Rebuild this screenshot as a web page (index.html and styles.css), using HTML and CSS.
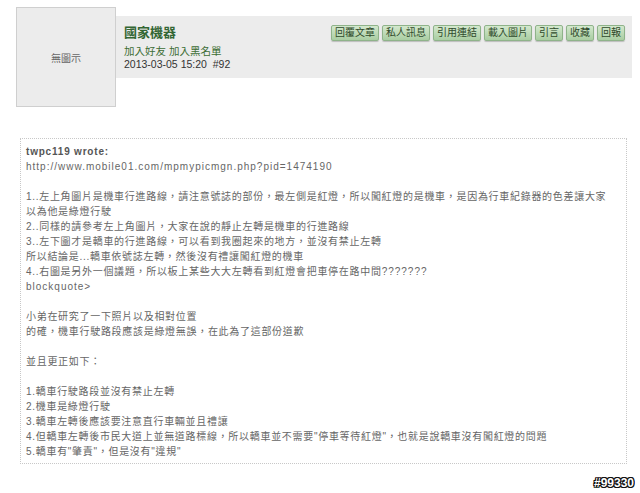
FILE: index.html
```html
<!DOCTYPE html>
<html>
<head>
<meta charset="utf-8">
<link rel="stylesheet" href="styles.css">
</head>
<body>
<div class="post">
  <div class="avatar">無圖示</div>
  <div class="head">
    <div class="info">
      <div class="name">國家機器</div>
      <div class="links"><a>加入好友</a> <a>加入黑名單</a></div>
      <div class="date">2013-03-05 15:20&nbsp; #92</div>
    </div>
    <div class="btns">
      <span class="btn">回覆文章</span>
      <span class="btn">私人訊息</span>
      <span class="btn">引用連結</span>
      <span class="btn">載入圖片</span>
      <span class="btn">引言</span>
      <span class="btn">收藏</span>
      <span class="btn">回報</span>
    </div>
  </div>
</div>
<div class="quote">
  <div class="ln who"><span class="en">twpc119 wrote:</span></div>
  <div class="ln"><span class="en">http://www.mobile01.com/mpmypicmgn.php?pid=1474190</span></div>
  <div class="ln blank"></div>
  <div class="ln">1..左上角圖片是機車行進路線，請注意號誌的部份，最左側是紅燈，所以闖紅燈的是機車，是因為行車紀錄器的色差讓大家</div>
  <div class="ln">以為他是綠燈行駛</div>
  <div class="ln">2..同樣的請參考左上角圖片，大家在說的靜止左轉是機車的行進路線</div>
  <div class="ln">3..左下圖才是轎車的行進路線，可以看到我圈起來的地方，並沒有禁止左轉</div>
  <div class="ln">所以結論是...轎車依號誌左轉，然後沒有禮讓闖紅燈的機車</div>
  <div class="ln">4..右圖是另外一個議題，所以板上某些大大左轉看到紅燈會把車停在路中間<span class="en">???????</span></div>
  <div class="ln"><span class="en">blockquote&gt;</span></div>
  <div class="ln blank"></div>
  <div class="ln">小弟在研究了一下照片以及相對位置</div>
  <div class="ln">的確，機車行駛路段應該是綠燈無誤，在此為了這部份道歉</div>
  <div class="ln blank"></div>
  <div class="ln">並且更正如下：</div>
  <div class="ln blank"></div>
  <div class="ln">1.轎車行駛路段並沒有禁止左轉</div>
  <div class="ln">2.機車是綠燈行駛</div>
  <div class="ln">3.轎車左轉後應該要注意直行車輛並且禮讓</div>
  <div class="ln">4.但轎車左轉後市民大道上並無道路標線，所以轎車並不需要"停車等待紅燈"，也就是說轎車沒有闖紅燈的問題</div>
  <div class="ln">5.轎車有"肇責"，但是沒有"違規"</div>
</div>
<div class="mark">#99330</div>
</body>
</html>
```
FILE: styles.css
```css
html, body {
  margin: 0;
  padding: 0;
  background: #fff;
  width: 640px;
  height: 493px;
  overflow: hidden;
  position: relative;
  font-family: "Liberation Sans", "Noto Sans CJK TC", sans-serif;
}
.post {
  display: flex;
  align-items: flex-start;
  padding: 7px 8px 0 16px;
}
.avatar {
  width: 98px;
  height: 98px;
  background: #ececec;
  border: 1px solid #cfcfcf;
  display: flex;
  align-items: center;
  justify-content: center;
  font-size: 10px;
  color: #666;
  flex: none;
}
.head {
  flex: 1;
  margin-top: 9px;
  height: 62px;
  background: #ececec;
  display: flex;
  justify-content: space-between;
  align-items: flex-start;
  padding: 8px 7px 0 8px;
  box-sizing: border-box;
}
.name {
  font-size: 13px;
  font-weight: bold;
  line-height: 18px;
  color: #336633;
}
.links {
  margin-top: 2px;
  font-size: 10.5px;
  line-height: 14px;
  color: #3d6e35;
}
.date {
  font-size: 10.5px;
  line-height: 13px;
  color: #333;
}
.btns {
  display: flex;
  gap: 3px;
  margin-top: 1px;
}
.btn {
  font-size: 10px;
  line-height: 12px;
  height: 12px;
  padding: 1px 3px;
  border: 1px solid #8fb38a;
  border-radius: 2px;
  background: linear-gradient(#d3e8cd, #a9cda2);
  color: #2f4a2b;
  box-shadow: 0 1px 1px rgba(0,0,0,0.2);
}
.quote {
  margin: 31px 13px 0 20px;
  border: 1px dotted #c8c8c8;
  padding: 5px;
  font-size: 10px;
  letter-spacing: 0.7px;
  color: #666;
  height: 314px;
}
.ln {
  line-height: 15px;
  height: 15px;
  white-space: nowrap;
}
.en {
  letter-spacing: 1px;
}
.who {
  font-weight: bold;
  color: #555;
}
.who .en {
  letter-spacing: 0.8px;
}
.mark {
  position: absolute;
  right: 6px;
  bottom: 3px;
  font-size: 12px;
  font-weight: bold;
  color: #fff;
  letter-spacing: 0;
  text-shadow: -1px 0 #111, 1px 0 #111, 0 -1px #111, 0 1px #111, -1px -1px #111, 1px 1px #111, -1px 1px #111, 1px -1px #111;
}
```
